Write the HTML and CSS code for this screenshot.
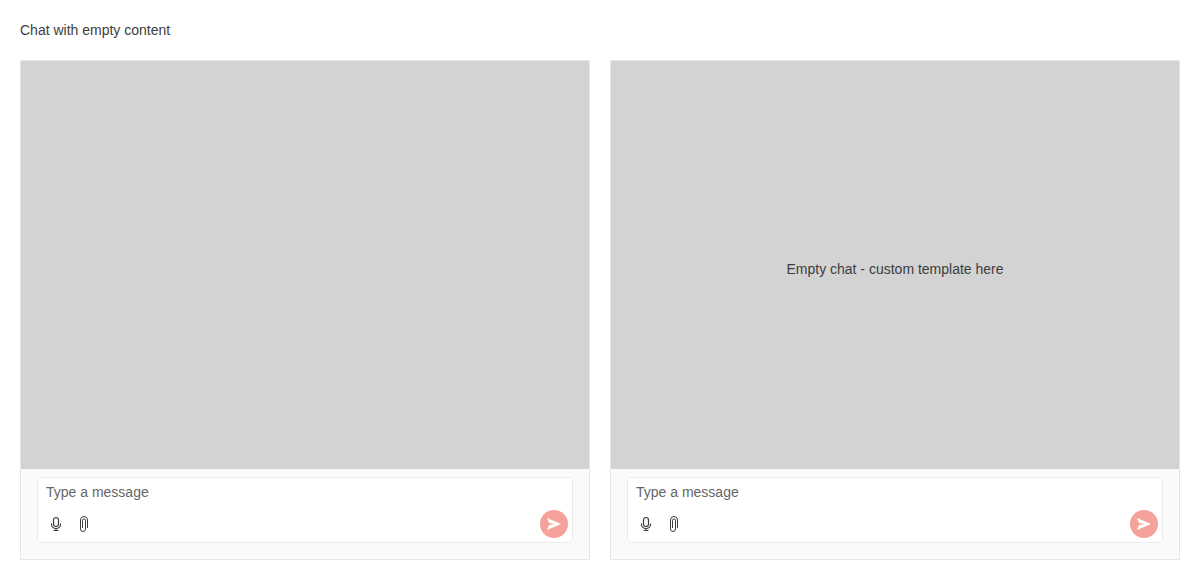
FILE: index.html
```html
<!DOCTYPE html>
<html lang="en">
<head>
<meta charset="utf-8">
<meta name="viewport" content="width=device-width, initial-scale=1">
<title>Chat with empty content</title>
<link rel="stylesheet" href="styles.css">
</head>
<body>
<svg class="icon-defs" aria-hidden="true">
  <symbol id="icon-mic" viewBox="0 0 16 16">
    <g fill="none" stroke="currentColor" stroke-width="1.2">
      <rect x="5.500" y="1.500" width="5" height="9" rx="2.500"/>
      <path d="M3.500 7.500V8.500a4.500 4 0 0 0 9 0V7.500M8 12.500v2M5.500 14.500h5"/>
    </g>
  </symbol>
  <symbol id="icon-clip" viewBox="0 0 16 16">
    <path fill="none" stroke="currentColor" d="M11.500 12V4A3.500 3.500 0 0 0 4.500 4V13A2.500 2.500 0 0 0 9.500 13V4.500A1.500 1.500 0 0 0 6.500 4.500V12"/>
  </symbol>
  <symbol id="icon-send" viewBox="0 0 16 16">
    <path fill="currentColor" d="M1 2l14 6-14 6 2-5 6-1-6-1z"/>
  </symbol>
</svg>
<main class="page">
  <p class="title">Chat with empty content</p>
  <div class="chats">
    <section class="chat" aria-label="Chat">
      <div class="messages"></div>
      <form class="composer">
        <div class="prompt">
          <textarea class="field" rows="1" placeholder="Type a message" aria-label="Message"></textarea>
          <div class="actions">
            <button class="tool" type="button" aria-label="Speech to text"><svg class="icon"><use href="#icon-mic"/></svg></button>
            <button class="tool" type="button" aria-label="Attach file"><svg class="icon"><use href="#icon-clip"/></svg></button>
            <button class="tool send" type="submit" aria-label="Send" disabled><svg class="icon"><use href="#icon-send"/></svg></button>
          </div>
        </div>
      </form>
    </section>
    <section class="chat" aria-label="Chat with template">
      <div class="messages">Empty chat - custom template here</div>
      <form class="composer">
        <div class="prompt">
          <textarea class="field" rows="1" placeholder="Type a message" aria-label="Message"></textarea>
          <div class="actions">
            <button class="tool" type="button" aria-label="Speech to text"><svg class="icon"><use href="#icon-mic"/></svg></button>
            <button class="tool" type="button" aria-label="Attach file"><svg class="icon"><use href="#icon-clip"/></svg></button>
            <button class="tool send" type="submit" aria-label="Send" disabled><svg class="icon"><use href="#icon-send"/></svg></button>
          </div>
        </div>
      </form>
    </section>
  </div>
</main>
</body>
</html>
```
FILE: styles.css
```css
* {
  box-sizing: border-box;
}

body {
  margin: 0;
  background: #fff;
  color: #3d3d3d;
  font: 14px/20px "Liberation Sans", Arial, sans-serif;
}

.icon-defs {
  display: none;
}

.page {
  display: flex;
  flex-direction: column;
  gap: 20px;
  min-height: 100vh;
  padding: 20px;
}

.title {
  margin: 0;
}

.chats {
  flex: 1;
  display: grid;
  grid-template-columns: 1fr 1fr;
  gap: 20px;
}

.chat {
  display: flex;
  flex-direction: column;
  border: 1px solid #e6e6e6;
  background: #fafafa;
}

.messages {
  flex: 1;
  display: flex;
  align-items: center;
  justify-content: center;
  padding: 16px 16px 8px;
  background: #d3d3d3;
}

.composer {
  padding: 8px 16px 16px;
}

.prompt {
  border: 1px solid #ebebeb;
  border-radius: 4px;
  background: #fff;
}

.field {
  display: block;
  width: 100%;
  height: 28px;
  padding: 4px 8px;
  border: 0;
  outline: 0;
  background: none;
  color: inherit;
  font: inherit;
  resize: none;
  overflow: hidden;
}

.field::placeholder {
  color: #666;
  opacity: 1;
}

.actions {
  display: flex;
  padding: 4px;
}

.tool {
  display: flex;
  align-items: center;
  justify-content: center;
  width: 28px;
  height: 28px;
  padding: 0;
  border: 0;
  background: none;
  color: #3d3d3d;
}

.send {
  margin-left: auto;
  border-radius: 50%;
  background: #f6a29c;
  color: #fff;
}

.icon {
  width: 16px;
  height: 16px;
}
```
